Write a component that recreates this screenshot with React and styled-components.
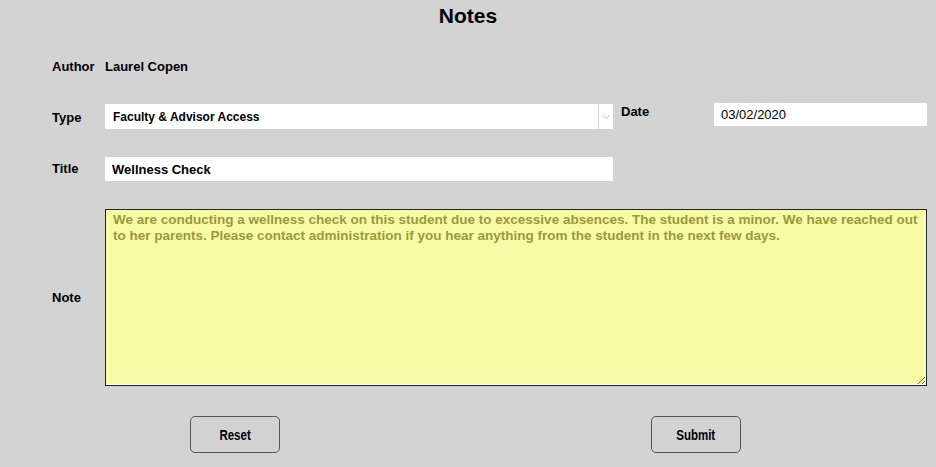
import React from 'react';
import styled, { createGlobalStyle } from 'styled-components';

const GlobalStyle = createGlobalStyle`
  html, body {
    margin: 0;
    padding: 0;
    background: #d3d3d3;
  }
  body {
    font-family: 'Liberation Sans', Arial, sans-serif;
    color: #000;
  }
`;

const Page = styled.div`
  width: 936px;
  height: 467px;
  background: #d3d3d3;
  box-sizing: border-box;
  padding: 4px 9px 0 52px;
  overflow: hidden;
`;

const Heading = styled.h1`
  margin: 0 0 0 -52px;
  width: 936px;
  text-align: center;
  font-size: 21px;
  line-height: 24px;
  font-weight: bold;
`;

const Row = styled.div`
  display: flex;
  align-items: ${({ $align }) => $align || 'center'};
  margin-top: ${({ $top }) => $top}px;
`;

const Label = styled.div`
  width: 53px;
  flex: none;
  font-size: 13px;
  line-height: 16px;
  font-weight: bold;
  margin-top: ${({ $top }) => $top || 0}px;
`;

const Value = styled.div`
  font-size: 13px;
  line-height: 16px;
  font-weight: bold;
`;

const SelectBox = styled.div`
  display: flex;
  width: 508px;
  height: 25px;
  margin-top: 1px;
  background: #fff;
  flex: none;
`;

const Select = styled.select`
  appearance: none;
  flex: 1;
  border: none;
  outline: none;
  background: transparent;
  font-family: 'Liberation Sans', Arial, sans-serif;
  font-size: 12px;
  font-weight: bold;
  color: #000;
  padding: 0 0 0 8px;
  margin: 0;
`;

const Arrow = styled.div`
  width: 14px;
  border-left: 1px solid #dcdcdc;
  display: flex;
  align-items: center;
  justify-content: center;
`;

const DateLabel = styled(Label)`
  width: 93px;
  margin-left: 8px;
`;

const TextInput = styled.input`
  box-sizing: border-box;
  width: ${({ $width }) => $width};
  flex: ${({ $flex }) => $flex || 'none'};
  height: ${({ $height }) => $height}px;
  border: none;
  outline: none;
  background: #fff;
  padding: 0 0 0 7px;
  margin: 0;
  font-family: 'Liberation Sans', Arial, sans-serif;
  font-size: 13px;
  font-weight: ${({ $bold }) => ($bold ? 'bold' : 'normal')};
  color: #000;
`;

const NoteArea = styled.textarea`
  box-sizing: border-box;
  flex: 1;
  height: 177px;
  margin: 0;
  border: 1px solid #1b2533;
  box-shadow: inset -1px -1px 0 #fff;
  background: #f8fba6;
  color: #9a9a3c;
  font-family: 'Liberation Sans', Arial, sans-serif;
  font-size: 13.5px;
  font-weight: bold;
  line-height: 16px;
  padding: 2px 6px 0 7px;
  resize: both;
  outline: none;
`;

const ButtonRow = styled.div`
  display: flex;
  gap: 371px;
  padding-left: 138px;
  margin-top: 30px;
`;

const Button = styled.button`
  width: 90px;
  height: 37px;
  box-sizing: border-box;
  border: 1px solid #555;
  border-radius: 5px;
  background: transparent;
  font-family: 'Liberation Sans', Arial, sans-serif;
  font-size: 14px;
  font-weight: bold;
  color: #000;
  padding: 0;
  cursor: pointer;
`;

const ButtonText = styled.span`
  display: inline-block;
  transform: scaleX(0.82);
`;

const noteText =
  'We are conducting a wellness check on this student due to excessive absences. The student is a minor. We have reached out to her parents. Please contact administration if you hear anything from the student in the next few days.';

export default function App() {
  return (
    <>
      <GlobalStyle />
      <Page>
        <Heading>Notes</Heading>

        <Row $top={31}>
          <Label>Author</Label>
          <Value>Laurel Copen</Value>
        </Row>

        <Row $top={28} $align="flex-start">
          <Label $top={7}>Type</Label>
          <SelectBox>
            <Select defaultValue="faculty">
              <option value="faculty">Faculty &amp; Advisor Access</option>
              <option value="private">Private</option>
            </Select>
            <Arrow>
              <svg width="7" height="4" viewBox="0 0 7 4">
                <path d="M0.5 0.5 L3.5 3.5 L6.5 0.5" fill="none" stroke="#b5b5b5" strokeWidth="1" />
              </svg>
            </Arrow>
          </SelectBox>
          <DateLabel $top={1}>Date</DateLabel>
          <TextInput $flex="1" $height={23} defaultValue="03/02/2020" />
        </Row>

        <Row $top={28}>
          <Label>Title</Label>
          <TextInput $width="508px" $height={24} $bold defaultValue="Wellness Check" />
        </Row>

        <Row $top={28}>
          <Label>Note</Label>
          <NoteArea defaultValue={noteText} />
        </Row>

        <ButtonRow>
          <Button type="reset"><ButtonText>Reset</ButtonText></Button>
          <Button type="submit"><ButtonText>Submit</ButtonText></Button>
        </ButtonRow>
      </Page>
    </>
  );
}
